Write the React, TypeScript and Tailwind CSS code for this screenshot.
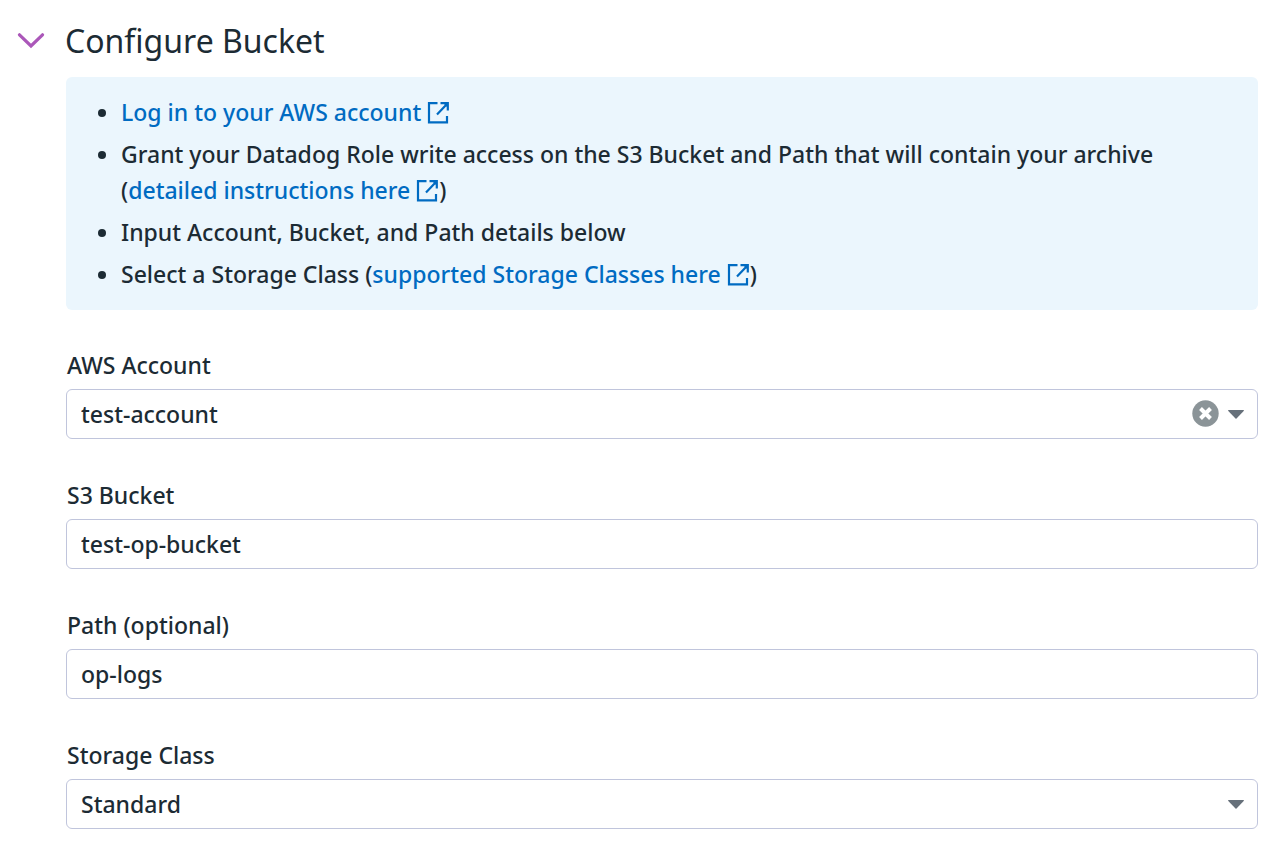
import { useState, type ReactNode } from "react";

const fieldClass =
  "h-[50px] w-full appearance-none rounded-md border border-[#c0c5dc] bg-white px-3.5 text-[23px] font-medium text-[#1c2b34] outline-none focus:border-[#006bc2]";

function ExternalIcon() {
  return (
    <svg
      viewBox="0 0 22 22"
      className="mr-px ml-1.5 inline-block size-[22px] align-[-3px]"
      fill="none"
      stroke="currentColor"
      strokeWidth="2.200"
      aria-hidden="true"
    >
      <path d="M10.500 1.200H2v19.200h18v-6.400M13.500 1.200h7.300v7.300M20 2L10 12.500" />
      <path d="M17 2h4v4z" fill="currentColor" stroke="none" />
    </svg>
  );
}

function DocLink({ children }: { children: string }) {
  return (
    <a href="#" className="text-[#006bc2] hover:underline">
      {children}
      <ExternalIcon />
    </a>
  );
}

function Caret() {
  return (
    <svg viewBox="0 0 16 9" className="h-[9px] w-4" fill="#66707a" aria-hidden="true">
      <path d="M.5 0h15q.8 0 .2 1L8.500 8.500q-.5.5-1 0L.3 1Q-.3 0 .5 0z" />
    </svg>
  );
}

function Field({ id, label, children }: { id: string; label: string; children: ReactNode }) {
  return (
    <div>
      <label htmlFor={id} className="mb-2 block pl-px leading-8">
        {label}
      </label>
      <div className="relative">{children}</div>
    </div>
  );
}

export default function App() {
  const [open, setOpen] = useState(true);
  const [account, setAccount] = useState("test-account");
  const [bucket, setBucket] = useState("test-op-bucket");
  const [path, setPath] = useState("op-logs");
  const [storageClass, setStorageClass] = useState("Standard");

  return (
    <div className="min-h-screen bg-white pt-5 pr-6 pb-5 pl-[17px] font-['Noto_Sans',sans-serif] text-[23px] font-medium text-[#1c2b34]">
      <div className="flex h-[42px] items-center gap-5">
        <button
          type="button"
          aria-label="Toggle section"
          aria-expanded={open}
          onClick={() => setOpen(!open)}
        >
          <svg
            viewBox="0 0 28 16"
            className="h-4 w-7"
            fill="none"
            stroke="#ab57b9"
            strokeWidth="3.200"
            strokeLinecap="round"
          >
            <path d="M2.500 1.800L14 13l11.500-11.200" />
          </svg>
        </button>
        <h1 className="text-[32px] font-normal">Configure Bucket</h1>
      </div>

      {open && (
        <div className="mt-[15px] ml-[49px]">
          <ul className="list-disc space-y-1.5 rounded-md bg-[#ebf6fd] pt-[17px] pr-14 pb-[18px] pl-[55px] leading-9">
            <li>
              <DocLink>Log in to your AWS account</DocLink>
            </li>
            <li>
              Grant your Datadog Role write access on the S3 Bucket and Path that will contain your
              archive (<DocLink>detailed instructions here</DocLink>)
            </li>
            <li>Input Account, Bucket, and Path details below</li>
            <li>
              Select a Storage Class (<DocLink>supported Storage Classes here</DocLink>)
            </li>
          </ul>

          <form className="mt-[39px] flex flex-col gap-10">
            <Field id="account" label="AWS Account">
              <select
                id="account"
                className={fieldClass}
                value={account}
                onChange={(e) => setAccount(e.target.value)}
              >
                <option value=""></option>
                <option>test-account</option>
              </select>
              <div className="pointer-events-none absolute inset-y-0 right-3.5 flex items-center gap-2">
                <button
                  type="button"
                  aria-label="Clear account"
                  className="pointer-events-auto"
                  onClick={() => setAccount("")}
                >
                  <svg viewBox="0 0 28 28" className="size-7">
                    <circle cx="13.500" cy="13.500" r="13.200" fill="#8b9498" />
                    <path d="M8.500 8.500l10 10M18.500 8.500l-10 10" stroke="white" strokeWidth="4" />
                  </svg>
                </button>
                <Caret />
              </div>
            </Field>
            <Field id="bucket" label="S3 Bucket">
              <input
                id="bucket"
                className={fieldClass}
                value={bucket}
                onChange={(e) => setBucket(e.target.value)}
              />
            </Field>
            <Field id="path" label="Path (optional)">
              <input
                id="path"
                className={fieldClass}
                value={path}
                onChange={(e) => setPath(e.target.value)}
              />
            </Field>
            <Field id="storage" label="Storage Class">
              <select
                id="storage"
                className={fieldClass}
                value={storageClass}
                onChange={(e) => setStorageClass(e.target.value)}
              >
                <option>Standard</option>
              </select>
              <div className="pointer-events-none absolute inset-y-0 right-3.5 flex items-center">
                <Caret />
              </div>
            </Field>
          </form>
        </div>
      )}
    </div>
  );
}
